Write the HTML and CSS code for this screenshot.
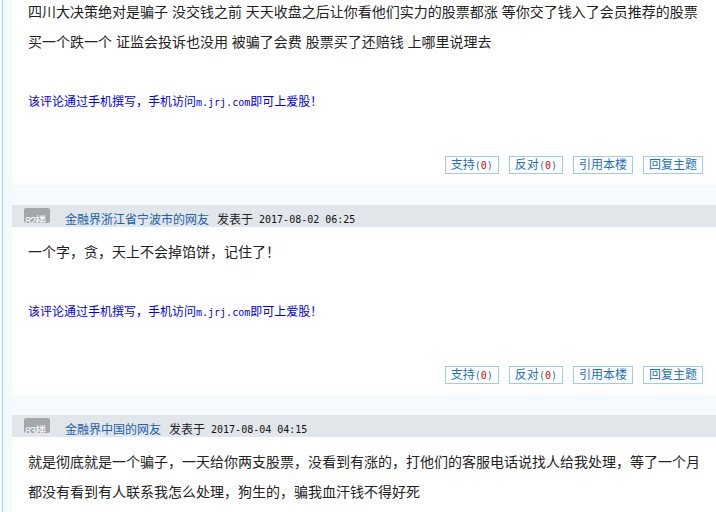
FILE: index.html
```html
<!DOCTYPE html>
<html lang="zh-CN">
<head>
    <meta charset="UTF-8">
    <meta name="viewport" content="width=device-width, initial-scale=1.0">
    <title>评论列表</title>
    <link rel="stylesheet" href="styles.css">
</head>
<body>
    <div class="page">
        <div class="side"></div>
        <div class="comments">

            <!-- post 81 (scrolled, header out of view) -->
            <div class="post post-cut">
                <div class="post-body">
                    <p class="post-text">四川大决策绝对是骗子 没交钱之前 天天收盘之后让你看他们实力的股票都涨 等你交了钱入了会员推荐的股票买一个跌一个 证监会投诉也没用 被骗了会费 股票买了还赔钱 上哪里说理去</p>
                    <p class="post-mobile">该评论通过手机撰写，手机访问<span class="mono">m.jrj.com</span>即可上爱股！</p>
                    <div class="post-actions">
                        <a class="btn" href="#">支持<span class="mono">(<em>0</em>)</span></a>
                        <a class="btn" href="#">反对<span class="mono">(<em>0</em>)</span></a>
                        <a class="btn" href="#">引用本楼</a>
                        <a class="btn" href="#">回复主题</a>
                    </div>
                </div>
            </div>

            <div class="post">
                <div class="post-head">
                    <span class="floor">82楼</span>
                    <a class="author" href="#">金融界浙江省宁波市的网友</a>
                    <span class="posted">发表于</span>
                    <span class="date mono">2017-08-02 06:25</span>
                </div>
                <div class="post-body">
                    <p class="post-text">一个字，贪，天上不会掉馅饼，记住了！</p>
                    <p class="post-mobile">该评论通过手机撰写，手机访问<span class="mono">m.jrj.com</span>即可上爱股！</p>
                    <div class="post-actions">
                        <a class="btn" href="#">支持<span class="mono">(<em>0</em>)</span></a>
                        <a class="btn" href="#">反对<span class="mono">(<em>0</em>)</span></a>
                        <a class="btn" href="#">引用本楼</a>
                        <a class="btn" href="#">回复主题</a>
                    </div>
                </div>
            </div>

            <div class="post">
                <div class="post-head">
                    <span class="floor">83楼</span>
                    <a class="author" href="#">金融界中国的网友</a>
                    <span class="posted">发表于</span>
                    <span class="date mono">2017-08-04 04:15</span>
                </div>
                <div class="post-body">
                    <p class="post-text">就是彻底就是一个骗子，一天给你两支股票，没看到有涨的，打他们的客服电话说找人给我处理，等了一个月都没有看到有人联系我怎么处理，狗生的，骗我血汗钱不得好死</p>
                    <p class="post-mobile">该评论通过手机撰写，手机访问<span class="mono">m.jrj.com</span>即可上爱股！</p>
                    <div class="post-actions">
                        <a class="btn" href="#">支持<span class="mono">(<em>0</em>)</span></a>
                        <a class="btn" href="#">反对<span class="mono">(<em>0</em>)</span></a>
                        <a class="btn" href="#">引用本楼</a>
                        <a class="btn" href="#">回复主题</a>
                    </div>
                </div>
            </div>

        </div>
    </div>
</body>
</html>
```

FILE: styles.css
```css
html, body {
    margin: 0;
    padding: 0;
    height: 100%;
    overflow: hidden;
}

body {
    font-family: "Liberation Sans", "Noto Sans CJK SC", sans-serif;
    color: #222;
    background: #fff;
}

a {
    text-decoration: none;
}

.mono {
    font-family: "DejaVu Sans Mono", monospace;
    font-size: 10px;
}

.page {
    display: flex;
    min-height: 100%;
}

.side {
    width: 12px;
    flex-shrink: 0;
    background: linear-gradient(to right, #f3f9fd 2px, #a6d3ec 2px, #a6d3ec 3px, #f3f9fd 3px);
}

.comments {
    flex: 1;
    background: #f5fafd;
}

.post {
    background: #fff;
    margin-bottom: 20px;
}

.post-head {
    display: flex;
    align-items: flex-start;
    height: 22px;
    padding-left: 12px;
    background: #e1e6ea;
    font-size: 12px;
    line-height: 14px;
}

.floor {
    box-sizing: border-box;
    width: 26px;
    height: 15px;
    margin-top: 3px;
    padding: 7px 0 0 1px;
    overflow: hidden;
    white-space: nowrap;
    background: #a3a7ab;
    border-radius: 2px;
    color: #fff;
    font-size: 11px;
    line-height: 12px;
    letter-spacing: -1px;
}

.author {
    margin: 8px 0 0 15px;
    color: #1d5fa9;
}

.posted {
    margin: 8px 0 0 8px;
}

.date {
    margin: 8px 0 0 6px;
    color: #111;
}

.post-body {
    padding: 0 13px 11px 16px;
}

.post-text {
    margin: 10px 0 0;
    font-size: 14px;
    line-height: 30px;
}

.post-cut .post-text {
    margin-top: -3px;
}

.post-mobile {
    margin: 35px 0 0;
    font-size: 12px;
    line-height: 20px;
    color: #0000f0;
}

.post-actions {
    display: flex;
    justify-content: flex-end;
    gap: 10px;
    margin-top: 43px;
}

.btn {
    box-sizing: border-box;
    height: 18px;
    padding: 0 5px;
    border: 1px solid #9bcfe9;
    font-size: 12px;
    line-height: 16px;
    color: #1b70c0;
}

.btn em {
    font-style: normal;
    color: #e00000;
}
```
